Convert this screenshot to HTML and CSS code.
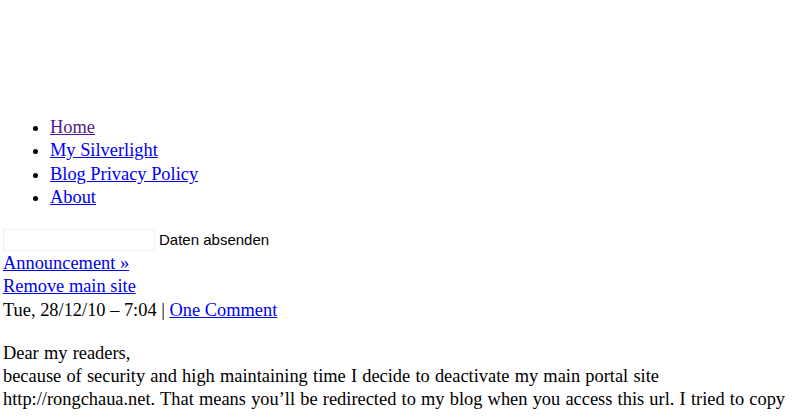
FILE: index.html
```html
<!DOCTYPE html>
<html>
<head>
<meta charset="utf-8">
<link rel="stylesheet" href="styles.css">
</head>
<body>
<div class="header"></div>
<ul class="nav">
<li><a class="visited" href="#">Home</a></li>
<li><a href="#">My Silverlight</a></li>
<li><a href="#">Blog Privacy Policy</a></li>
<li><a href="#">About</a></li>
</ul>
<form class="search">
<input class="search-input" type="text"><button class="search-btn" type="button">Daten absenden</button>
</form>
<div class="crumbs">
<a href="#">Announcement »</a><br>
<a href="#">Remove main site</a>
</div>
<div class="meta">Tue, 28/12/10 – 7:04 | <a href="#">One Comment</a></div>
<p class="content">Dear my readers,<br>
because of security and high maintaining time I decide to deactivate my main portal site http://rongchaua.net. That means you’ll be redirected to my blog when you access this url. I tried to copy</p>
</body>
</html>
```
FILE: styles.css
```css
html, body {
  margin: 0;
  padding: 0;
  background: #fff;
}
body {
  padding: 0 3px;
  font-family: "Liberation Serif", "Times New Roman", serif;
  font-size: 18.4px;
  line-height: 23px;
  color: #000;
}
a {
  color: #0000ee;
}
a.visited {
  color: #551a8b;
}
.header {
  height: 116px;
}
.nav {
  margin: 0;
  padding-left: 47px;
  line-height: 23.4px;
}
.search {
  margin: 19px 0 0;
  display: flex;
  align-items: center;
  height: 22px;
}
.search-input {
  width: 152px;
  height: 22px;
  box-sizing: border-box;
  border: 1px solid #f0f0f0;
  margin: 0;
  padding: 0;
}
.search-btn {
  border: 0;
  background: none;
  font-family: "Liberation Sans", Arial, sans-serif;
  font-size: 15px;
  padding: 0 0 0 4px;
  margin: 0;
  color: #000;
}
.crumbs {
  margin-top: 1px;
}
.meta {
  margin-top: 1px;
}
.content {
  margin: 20px 0 0;
  word-spacing: 0.6px;
}
```
